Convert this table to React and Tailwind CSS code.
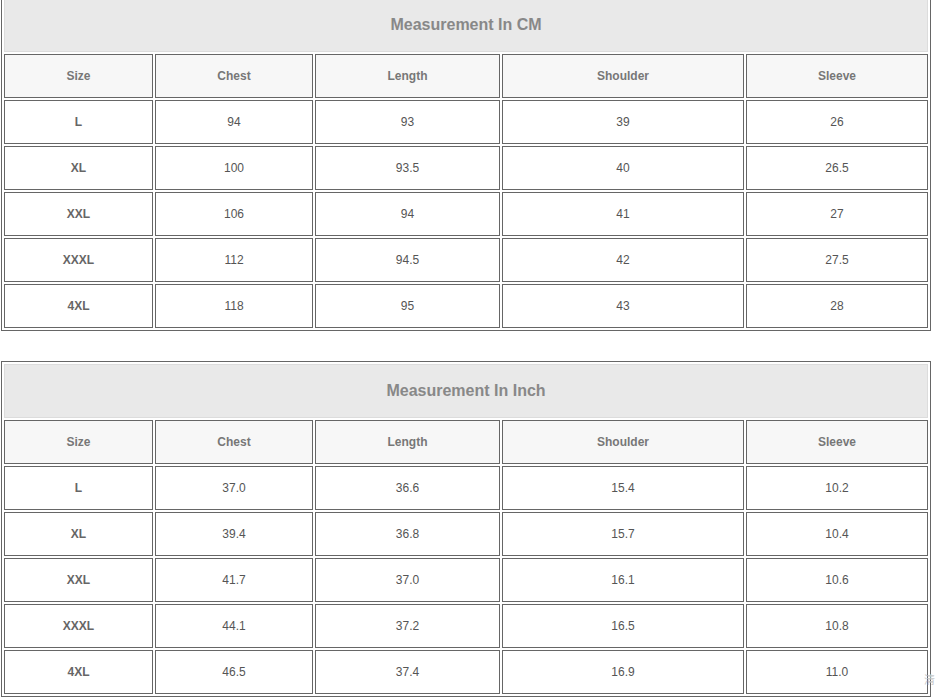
const cols = ['Size', 'Chest', 'Length', 'Shoulder', 'Sleeve'];
const widths = ['w-[149px]', 'w-[158px]', 'w-[185px]', 'w-[242px]', 'w-[182px]'];

const cmRows = [
  ['L', '94', '93', '39', '26'],
  ['XL', '100', '93.5', '40', '26.5'],
  ['XXL', '106', '94', '41', '27'],
  ['XXXL', '112', '94.5', '42', '27.5'],
  ['4XL', '118', '95', '43', '28'],
];

const inchRows = [
  ['L', '37.0', '36.6', '15.4', '10.2'],
  ['XL', '39.4', '36.8', '15.7', '10.4'],
  ['XXL', '41.7', '37.0', '16.1', '10.6'],
  ['XXXL', '44.1', '37.2', '16.5', '10.8'],
  ['4XL', '46.5', '37.4', '16.9', '11.0'],
];

function SizeTable({ title, rows, className }) {
  return (
    <table className={`table-fixed w-[930px] ml-[1px] border-separate border-spacing-[2px] border border-[#666] ${className}`}>
      <colgroup>
        {widths.map((w, i) => (
          <col key={i} className={w} />
        ))}
      </colgroup>
      <thead>
        <tr>
          <th colSpan={5} className="h-[54px] p-0 border border-[#dcdcdc] bg-[#e9e9e9] text-[16px] font-bold text-[#888] text-center">
            {title}
          </th>
        </tr>
        <tr>
          {cols.map((c) => (
            <th key={c} className="h-[44px] p-0 border border-[#666] bg-[#f7f7f7] text-[12px] font-bold text-[#777] text-center">
              {c}
            </th>
          ))}
        </tr>
      </thead>
      <tbody>
        {rows.map((r) => (
          <tr key={r[0]}>
            {r.map((v, i) => (
              <td key={i} className={`h-[44px] p-0 border border-[#666] bg-white text-[12px] text-center ${i === 0 ? 'font-bold text-[#666]' : 'text-[#555]'}`}>
                {v}
              </td>
            ))}
          </tr>
        ))}
      </tbody>
    </table>
  );
}

export default function App() {
  return (
    <div className="relative w-[936px] h-[700px] overflow-hidden bg-white font-['Liberation_Sans',Arial,sans-serif]">
      <SizeTable title="Measurement In CM" rows={cmRows} className="mt-[-5px]" />
      <SizeTable title="Measurement In Inch" rows={inchRows} className="mt-[30px]" />
      {/* faint watermark glyph at the lower right edge */}
      <span className="absolute left-[924px] top-[674px] text-[11px] leading-none text-[#c8c8c8] font-['Noto_Sans_CJK_SC',sans-serif]">清</span>
    </div>
  );
}
